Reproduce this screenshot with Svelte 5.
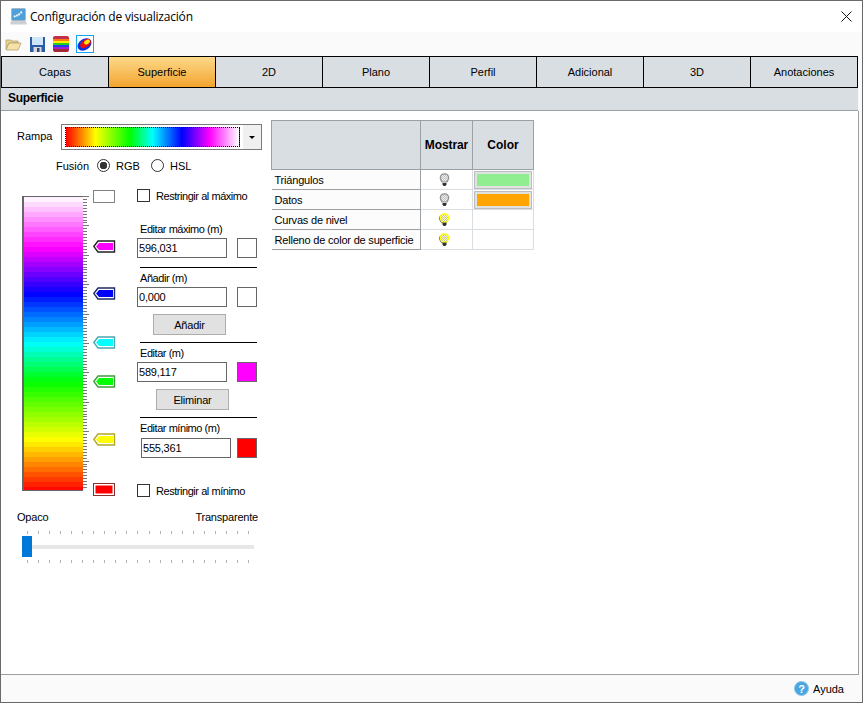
<script>
  const tabs = ['Capas', 'Superficie', '2D', 'Plano', 'Perfil', 'Adicional', '3D', 'Anotaciones'];

  // ramp stops, top to bottom: [position in px, r, g, b]
  const stops = [
    [0, 255, 255, 255],
    [51, 255, 0, 255],
    [97, 0, 0, 255],
    [146, 0, 255, 255],
    [185, 0, 255, 0],
    [243, 255, 255, 0],
    [294, 255, 0, 0]
  ];

  function colorAt(y) {
    let i = 0;
    while (i < stops.length - 2 && y > stops[i + 1][0]) i++;
    const a = stops[i];
    const b = stops[i + 1];
    const t = (y - a[0]) / (b[0] - a[0]);
    const c = [1, 2, 3].map((k) => Math.round(a[k] + (b[k] - a[k]) * t));
    return `rgb(${c[0]},${c[1]},${c[2]})`;
  }

  const bandHeight = 5;
  const bands = Array.from({ length: 59 }, (_, i) => colorAt(i * bandHeight + bandHeight / 2));

  const markers = [
    { top: 4, fill: '#ffffff', line: '#808080', flat: true },
    { top: 54, fill: '#ff00ff', line: '#222222' },
    { top: 101, fill: '#0000ff', line: '#1c2a66' },
    { top: 150, fill: '#00ffff', line: '#4aa8b0' },
    { top: 189, fill: '#00ff00', line: '#3c9a3c' },
    { top: 247, fill: '#ffff00', line: '#b0a828' },
    { top: 297, fill: '#ff0000', line: '#8a3030', flat: true }
  ];

  const sliderTicks = Array.from({ length: 21 }, (_, i) => i);

  const rows = [
    { name: 'Triángulos', on: false, color: '#90ee90' },
    { name: 'Datos', on: false, color: '#ffa500' },
    { name: 'Curvas de nivel', on: true },
    { name: 'Relleno de color de superficie', on: true }
  ];
</script>

<div class="window">
  <header class="titlebar">
    <svg class="app-icon" width="17" height="17" viewBox="0 0 17 17">
      <rect x="1.500" y=".5" width="14" height="12" rx="1" fill="#4f9fd8" stroke="#a8b8c4" />
      <path d="M4 9l2-2 2 1 2-3 2-1" stroke="#e8f4fc" stroke-width="2" stroke-dasharray="2 1" fill="none" />
      <path d="M1 13h15l1 3.500H0z" fill="#ccd0d4" />
    </svg>
    <span class="title">Configuración de visualización</span>
    <svg class="close" width="11" height="11" viewBox="0 0 11 11">
      <path d="M.5.5l10 10M10.5.5l-10 10" stroke="#111" stroke-width="1" />
    </svg>
  </header>

  <div class="toolbar">
    <svg class="tool folder" width="17" height="14" viewBox="0 0 17 14">
      <path d="M1 3h5l1 1h6v2H4L1 12z" fill="#ecd48c" stroke="#a89868" stroke-width=".7" />
      <path d="M1 13l3-7h12l-3 7z" fill="#f6e2a8" stroke="#a89868" stroke-width=".7" />
    </svg>
    <svg class="tool floppy" width="15" height="15" viewBox="0 0 15 15">
      <path d="M0 0h15v15H0z" fill="#2a5ca8" />
      <rect x="2" y="0" width="11" height="8" fill="#cfe6f8" />
      <rect x="3.500" y="10" width="8" height="5" fill="#d8d8d8" />
      <rect x="7" y="11" width="2.500" height="4" fill="#2a4a80" />
    </svg>
    <svg class="tool rainbow" width="16" height="16" viewBox="0 0 16 16">
      <defs>
        <clipPath id="ramp-clip"><rect width="16" height="16" rx="2" /></clipPath>
      </defs>
      <g clip-path="url(#ramp-clip)">
        <rect width="16" height="3" fill="#c0304a" />
        <rect y="3" width="16" height="2" fill="#ff7a10" />
        <rect y="5" width="16" height="2" fill="#ffee00" />
        <rect y="7" width="16" height="2" fill="#20d020" />
        <rect y="9" width="16" height="2" fill="#2040f0" />
        <rect y="11" width="16" height="2" fill="#a020d0" />
        <rect y="13" width="16" height="3" fill="#a02838" />
      </g>
    </svg>
    <svg class="tool heat" width="18" height="18" viewBox="0 0 18 18">
      <rect x=".5" y=".5" width="17" height="17" fill="#fff" stroke="#10a8f0" />
      <ellipse cx="8.500" cy="9.500" rx="7.500" ry="5.500" transform="rotate(-35 8.500 9.500)" fill="#1030e0" />
      <ellipse cx="9.500" cy="8.500" rx="6" ry="3.800" transform="rotate(-35 9.500 8.500)" fill="#e81010" />
      <ellipse cx="11" cy="7" rx="3.200" ry="2" transform="rotate(-35 11 7)" fill="#ffe810" />
    </svg>
  </div>

  <nav class="tabs">
    {#each tabs as tab}
      <div class="tab" class:active={tab === 'Superficie'}>{tab}</div>
    {/each}
  </nav>

  <div class="section-head">Superficie</div>

  <main class="panel">
    <section class="left">
      <div class="ramp-row">
        <span class="ramp-label">Rampa</span>
        <div class="combo">
          <div class="combo-value"><div class="combo-ramp"></div></div>
          <div class="combo-arrow"><span></span></div>
        </div>
      </div>

      <div class="blend">
        <span class="blend-label">Fusión</span>
        <span class="radio checked"></span>
        <span class="radio-text">RGB</span>
        <span class="radio"></span>
        <span class="radio-text">HSL</span>
      </div>

      <div class="scale">
        <div class="bar">
          {#each bands as band}
            <div style:background={band}></div>
          {/each}
        </div>
        <div class="bar-ticks"></div>
        <div class="markers">
          {#each markers as m}
            <svg class="marker" style:top="{m.top}px" width="23" height="13" viewBox="0 0 23 13">
              {#if m.flat}
                <rect x=".5" y=".5" width="21" height="12" fill="#fff" stroke={m.line} />
                <rect x="2.500" y="2.500" width="17" height="8" fill={m.fill} stroke="none" />
              {:else}
                <path d="M.8 6.500L5 1h16.500v11H5z" fill="#fff" stroke={m.line} stroke-width="1.400" />
                <path d="M3 6.500L6 3h14v7H6z" fill={m.fill} />
              {/if}
            </svg>
          {/each}
        </div>

        <div class="editor">
          <label class="check"><span class="box"></span>Restringir al máximo</label>

          <div class="caption first">Editar máximo (m)</div>
          <div class="field">
            <div class="input">596,031</div>
            <div class="swatch"></div>
          </div>
          <div class="rule"></div>

          <div class="caption">Añadir (m)</div>
          <div class="field">
            <div class="input">0,000</div>
            <div class="swatch"></div>
          </div>
          <button class="add">Añadir</button>
          <div class="rule"></div>

          <div class="caption">Editar (m)</div>
          <div class="field">
            <div class="input">589,117</div>
            <div class="swatch magenta"></div>
          </div>
          <button class="remove">Eliminar</button>
          <div class="rule"></div>

          <div class="caption">Editar mínimo (m)</div>
          <div class="field min">
            <div class="input">555,361</div>
            <div class="swatch red"></div>
          </div>
          <label class="check last"><span class="box"></span>Restringir al mínimo</label>
        </div>
      </div>

      <div class="opacity">
        <div class="opacity-labels"><span>Opaco</span><span>Transparente</span></div>
        <div class="slider-ticks">
          {#each sliderTicks as t}<i></i>{/each}
        </div>
        <div class="slider">
          <div class="thumb"></div>
        </div>
        <div class="slider-ticks">
          {#each sliderTicks as t}<i></i>{/each}
        </div>
      </div>
    </section>

    <table class="layers">
      <thead>
        <tr>
          <th class="name"></th>
          <th class="show">Mostrar</th>
          <th class="color">Color</th>
        </tr>
      </thead>
      <tbody>
        {#each rows as row}
          <tr>
            <td class="name">{row.name}</td>
            <td class="show">
              <svg width="11" height="14" viewBox="0 0 11 14">
                <defs>
                  <pattern id="dither-{row.on ? 'on' : 'off'}" width="2" height="2" patternUnits="userSpaceOnUse">
                    <rect width="2" height="2" fill={row.on ? '#ffffa0' : '#f0f0f0'} />
                    <rect width="1" height="1" fill="#c0c0c0" />
                    <rect x="1" y="1" width="1" height="1" fill="#c0c0c0" />
                  </pattern>
                </defs>
                {#if row.on}
                  <path
                    d="M5.500.8C2.900.8 1.300 2.600 1.300 4.800c0 1.800 1.200 2.800 1.700 4.200h5c.5-1.400 1.700-2.400 1.700-4.200C9.700 2.600 8.100.8 5.500.8z"
                    fill="none"
                    stroke="#333"
                    stroke-width="1"
                    transform="translate(-.6 .6)"
                  />
                {/if}
                <path
                  d="M5.500.8C2.900.8 1.300 2.600 1.300 4.800c0 1.800 1.200 2.800 1.700 4.200h5c.5-1.400 1.700-2.400 1.700-4.200C9.700 2.600 8.100.8 5.500.8z"
                  fill="url(#dither-{row.on ? 'on' : 'off'})"
                  stroke={row.on ? '#ffff00' : '#909090'}
                  stroke-width="1.200"
                />
                <path d="M3.500 10h4v1.500l-1 1.500h-2l-1-1.500z" fill="#333" />
              </svg>
            </td>
            <td class="color">
              {#if row.color}
                <div class="color-box"><div style:background={row.color}></div></div>
              {/if}
            </td>
          </tr>
        {/each}
      </tbody>
    </table>
  </main>

  <footer class="footer">
    <svg width="15" height="15" viewBox="0 0 15 15">
      <circle cx="7.500" cy="7.500" r="7" fill="#4aa6e0" stroke="#8cc4e8" />
      <text x="7.500" y="11.500" text-anchor="middle" font-size="11" font-weight="700" fill="#fff">?</text>
    </svg>
    <span>Ayuda</span>
  </footer>
</div>

<style>
  :global(body) {
    margin: 0;
    background: #fff;
  }

  .window {
    box-sizing: border-box;
    width: 863px;
    height: 703px;
    display: flex;
    flex-direction: column;
    border: 1px solid #6a6a6a;
    background: #fafafa;
    font: 11px "Liberation Sans", Arial, sans-serif;
    color: #000;
  }

  .titlebar {
    height: 31px;
    flex: none;
    display: flex;
    align-items: center;
    background: #fff;
    padding: 0 10px 0 9px;
  }

  .app-icon {
    margin-right: 3px;
  }

  .title {
    font: 12px "Open Sans", sans-serif;
    letter-spacing: -0.2px;
    flex: 1;
  }

  .toolbar {
    height: 24px;
    flex: none;
    display: flex;
    align-items: center;
    padding-left: 4px;
  }

  .tool {
    flex: none;
  }

  .floppy {
    margin-left: 8px;
  }

  .rainbow {
    margin-left: 8px;
  }

  .heat {
    margin-left: 7px;
  }

  .tabs {
    height: 32px;
    flex: none;
    display: flex;
    box-sizing: border-box;
    width: 857px;
    border: 1px solid #000;
    background: #d9dee2;
  }

  .tab {
    width: 107px;
    flex: none;
    display: flex;
    align-items: center;
    justify-content: center;
    border-left: 1px solid #000;
    box-sizing: border-box;
  }

  .tab:first-child {
    width: 106px;
    border-left: none;
  }

  .tab.active {
    background: linear-gradient(#fdd98a, #f2a52f);
  }

  .section-head {
    height: 23px;
    width: 857px;
    flex: none;
    box-sizing: border-box;
    border-bottom: 1px solid #9aa0a4;
    background: #d9dee2;
    padding-left: 7px;
    line-height: 21px;
    font-size: 12px;
    font-weight: 700;
    letter-spacing: -0.3px;
  }

  .panel {
    flex: 1;
    width: 858px;
    box-sizing: border-box;
    display: flex;
    align-items: flex-start;
    background: #fff;
    border-right: 1px solid #9aa0a4;
    border-bottom: 1px solid #9aa0a4;
  }

  .left {
    width: 270px;
    flex: none;
  }

  .ramp-row {
    display: flex;
    align-items: center;
    margin-top: 13px;
    padding-left: 16px;
  }

  .ramp-label {
    width: 44px;
    margin-bottom: 2px;
  }

  .combo {
    display: flex;
    width: 201px;
    height: 26px;
    box-sizing: border-box;
    border: 1px solid #7a7a7a;
    background: #f0f0f0;
  }

  .combo-value {
    width: 181px;
    background: #fff;
    padding: 2px 3px;
    box-sizing: border-box;
  }

  .combo-ramp {
    height: 100%;
    box-sizing: border-box;
    border: 1px dotted #000;
    background: linear-gradient(90deg, #f00, #ff0 17%, #0f0 37%, #0ff 50%, #00f 67%, #f0f 83%, #fff);
  }

  .combo-arrow {
    flex: 1;
    display: flex;
    align-items: center;
    justify-content: center;
  }

  .combo-arrow span {
    border: 3px solid transparent;
    border-top: 3px solid #000;
    border-bottom: 0;
  }

  .blend {
    display: flex;
    align-items: center;
    height: 13px;
    margin-top: 9px;
    padding-left: 55px;
  }

  .blend-label {
    width: 41px;
  }

  .radio {
    width: 13px;
    height: 13px;
    box-sizing: border-box;
    border: 1px solid #333;
    border-radius: 50%;
    margin-right: 6px;
  }

  .radio.checked {
    background: radial-gradient(circle, #333 3.5px, #fff 4px);
  }

  .radio-text {
    width: 35px;
  }

  .scale {
    display: flex;
    align-items: flex-start;
    margin-top: 14px;
    padding-left: 21px;
  }

  .bar {
    width: 61px;
    height: 295px;
    flex: none;
    margin-top: 10px;
    box-sizing: border-box;
    border: 1px solid #666;
    border-width: 1px 0 1px 2px;
    display: flex;
    flex-direction: column;
    overflow: hidden;
  }

  .bar div {
    height: 5px;
    flex: none;
  }

  .bar-ticks {
    width: 6px;
    height: 294px;
    flex: none;
    margin-top: 10px;
    background:
      repeating-linear-gradient(#777 0 1px, transparent 1px 29.4px) 0 0 / 6px 100% no-repeat,
      repeating-linear-gradient(#777 0 1px, transparent 1px 2.94px) 0 0 / 4px 100% no-repeat;
  }

  .markers {
    position: relative;
    width: 45px;
    height: 310px;
    flex: none;
    margin-left: 3px;
  }

  .marker {
    position: absolute;
    left: 1px;
  }

  .editor {
    width: 121px;
    flex: none;
    letter-spacing: -0.45px;
  }

  .check {
    display: flex;
    align-items: center;
    height: 13px;
    margin-top: 3px;
    white-space: nowrap;
  }

  .box {
    width: 13px;
    height: 13px;
    box-sizing: border-box;
    border: 1px solid #333;
    margin-right: 6px;
    flex: none;
  }

  .check.last {
    margin-top: 26px;
  }

  .caption {
    height: 13px;
    line-height: 13px;
    margin: 4px 0 2px 3px;
  }

  .caption.first {
    margin-top: 21px;
  }

  .field {
    display: flex;
    height: 20px;
  }

  .field.min {
    margin-top: 3px;
    padding-left: 4px;
  }

  .input {
    width: 90px;
    height: 20px;
    box-sizing: border-box;
    border: 1px solid #666;
    line-height: 18px;
    padding-left: 1px;
    letter-spacing: -0.2px;
  }

  .swatch {
    width: 20px;
    height: 20px;
    box-sizing: border-box;
    border: 1px solid #666;
    margin-left: 10px;
  }

  .field.min .swatch {
    margin-left: 6px;
  }

  .swatch.magenta {
    background: #ff00ff;
  }

  .swatch.red {
    background: #ff0000;
  }

  .rule {
    height: 1px;
    background: #000;
    margin: 9px 1px 0 3px;
  }

  button {
    display: block;
    width: 73px;
    height: 21px;
    margin: 7px 0 -2px;
    padding: 0;
    box-sizing: border-box;
    border: 1px solid #adadad;
    background: #e1e1e1;
    font: inherit;
    letter-spacing: -0.2px;
    color: #000;
  }

  .add {
    margin-left: 16px;
  }

  .remove {
    margin-left: 19px;
  }

  .opacity {
    padding: 0 17px 0 16px;
    margin-top: 14px;
  }

  .opacity-labels {
    display: flex;
    justify-content: space-between;
    height: 13px;
    line-height: 13px;
    margin-right: -4px;
    letter-spacing: -0.2px;
  }

  .slider-ticks {
    display: flex;
    justify-content: space-between;
    padding: 0 5px 0 10px;
    margin-top: 7px;
    height: 3px;
  }

  .slider-ticks i {
    width: 1px;
    background: #b4b4b4;
  }

  .slider {
    height: 21px;
    margin: 2px 0 -4px 5px;
    background: linear-gradient(#e7e7e7, #e7e7e7) no-repeat 0 9px / 100% 4px;
  }

  .thumb {
    width: 10px;
    height: 21px;
    background: #0078d7;
  }

  .layers {
    margin: 9px 0 0 0;
    border-collapse: collapse;
    table-layout: fixed;
    width: 263px;
  }

  .layers th {
    height: 48px;
    padding: 0;
    background: #d9dee2;
    border: 1px solid #9aa0a4;
    font-size: 12px;
    font-weight: 700;
    text-align: center;
  }

  .layers th.name {
    width: 148px;
  }

  .layers th.show {
    width: 51px;
    letter-spacing: -0.1px;
  }

  .layers td {
    height: 19px;
    padding: 0;
    border-bottom: 1px solid #d9dee2;
    border-right: 1px solid #d9dee2;
    text-align: center;
  }

  .layers td.name {
    text-align: left;
    padding-left: 3px;
    border-bottom-color: #9aa0a4;
    background: #fcfcfc;
    border-right-color: #9aa0a4;
    letter-spacing: -0.2px;
    white-space: nowrap;
  }

  .layers td.show {
    padding-right: 4px;
  }

  .layers td svg {
    display: block;
    margin: 0 auto;
  }

  .color-box {
    box-sizing: border-box;
    height: 18px;
    margin: 0 1px;
    padding: 2px;
    border: 1px solid #bdbdbd;
    background: #e1e1e1;
  }

  .color-box div {
    height: 12px;
  }

  .footer {
    height: 27px;
    flex: none;
    display: flex;
    align-items: center;
    justify-content: flex-end;
    gap: 4px;
    padding-right: 18px;
  }
</style>
